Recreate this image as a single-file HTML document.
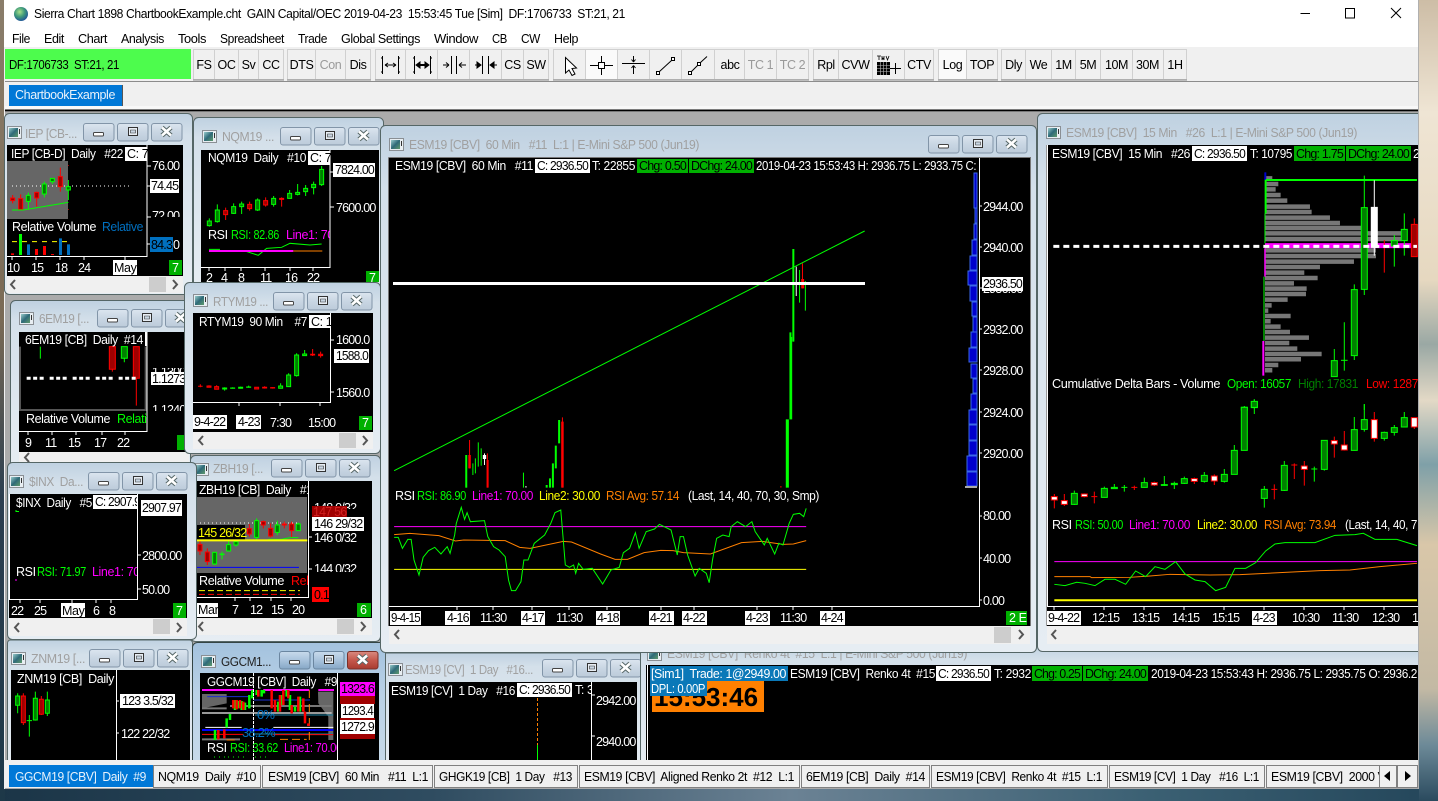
<!DOCTYPE html>
<html><head><meta charset="utf-8"><title>Sierra Chart</title>
<style>
html,body{margin:0;padding:0;width:1438px;height:801px;overflow:hidden;background:#1d3848}
svg{display:block}
text{font-family:"Liberation Sans",sans-serif;font-size:12.5px;fill:#fff;white-space:pre;letter-spacing:-.4px}
.n{letter-spacing:-.8px}
.k{fill:#000}
.g{fill:#00ff00}.m{fill:#ff00ff}.y{fill:#ffff00}.o{fill:#ff8000}.r{fill:#ff0000}.dg{fill:#008000}.b{fill:#0070c0}
.t{fill:#a0a0a0;font-size:12.5px}
.d{fill:#9a9a9a}
path,line,rect,polyline{vector-effect:non-scaling-stroke}
.gw{stroke:#0f0;fill:none}.gb{stroke:#0f0;fill:#008000}
.rw{stroke:#f00;fill:none}.rb{stroke:#f00;fill:#a00000}.rwb{stroke:#f00;fill:#fff}
.lg{stroke:#0f0;fill:none}.lo{stroke:#ff8000;fill:none}
.ch{stroke:#555;stroke-width:2;fill:none}
</style></head><body>
<svg width="1438" height="801" viewBox="0 0 1438 801" xmlns="http://www.w3.org/2000/svg">
<defs>
<linearGradient id="fr" x1="0" y1="0" x2="0" y2="1"><stop offset="0" stop-color="#bfd1e1"/><stop offset=".12" stop-color="#d4e0ea"/><stop offset="1" stop-color="#e6edf3"/></linearGradient>
<linearGradient id="fa" x1="0" y1="0" x2="0" y2="1"><stop offset="0" stop-color="#a3c2de"/><stop offset=".4" stop-color="#b9d1e6"/><stop offset="1" stop-color="#c8dbea"/></linearGradient>
<linearGradient id="btn" x1="0" y1="0" x2="0" y2="1"><stop offset="0" stop-color="#dbe5ef"/><stop offset=".5" stop-color="#c9d6e3"/><stop offset="1" stop-color="#bccbda"/></linearGradient>
<linearGradient id="btna" x1="0" y1="0" x2="0" y2="1"><stop offset="0" stop-color="#c8daec"/><stop offset=".5" stop-color="#a9c3dc"/><stop offset="1" stop-color="#86a7c6"/></linearGradient>
<linearGradient id="cls" x1="0" y1="0" x2="0" y2="1"><stop offset="0" stop-color="#d88a80"/><stop offset=".5" stop-color="#c5584c"/><stop offset="1" stop-color="#a83b30"/></linearGradient>
<linearGradient id="ic" x1="0" y1="0" x2="1" y2="1"><stop offset="0" stop-color="#9cc"/><stop offset=".5" stop-color="#2f6a78"/><stop offset="1" stop-color="#5f9a6c"/></linearGradient>
<radialGradient id="gl" cx=".4" cy=".35" r=".7"><stop offset="0" stop-color="#a8e08a"/><stop offset=".5" stop-color="#3f9a7a"/><stop offset="1" stop-color="#1d4f9a"/></radialGradient>
<linearGradient id="wr" x1="0" y1="0" x2="0" y2="1"><stop offset="0" stop-color="#cdbda6"/><stop offset=".14" stop-color="#efe5d4"/><stop offset=".35" stop-color="#e6d8c0"/><stop offset=".43" stop-color="#9aa8a4"/><stop offset=".5" stop-color="#e3d9c6"/><stop offset=".58" stop-color="#7fa0a8"/><stop offset=".68" stop-color="#d9c7a9"/><stop offset=".86" stop-color="#c3b9a4"/><stop offset=".93" stop-color="#6d8a98"/><stop offset="1" stop-color="#2a4a5e"/></linearGradient>
<linearGradient id="wl" x1="0" y1="0" x2="0" y2="1"><stop offset="0" stop-color="#8a7d6a"/><stop offset=".4" stop-color="#7a6a55"/><stop offset=".62" stop-color="#2c3f50"/><stop offset="1" stop-color="#1d3848"/></linearGradient>
<linearGradient id="wb" x1="0" y1="0" x2="1" y2="0"><stop offset="0" stop-color="#1b3547"/><stop offset=".3" stop-color="#2f4c60"/><stop offset=".55" stop-color="#6b8294"/><stop offset=".8" stop-color="#3b6073"/><stop offset="1" stop-color="#24465a"/></linearGradient>
<g id="ico"><rect x=".5" y=".5" width="14" height="12" fill="#e8eef2" stroke="#8a8f94"/><rect x="2" y="2" width="9" height="9" fill="url(#ic)"/><rect x="12" y="3" width="1" height="5" fill="#333"/></g>
<g id="b1"><rect x=".5" y=".5" width="30.5" height="17.5" rx="2.5" fill="url(#btn)" stroke="#8295a8"/></g>
<g id="gly"><rect x="10.5" y="9.5" width="10" height="3.5" rx="1" fill="#fff" stroke="#444"/>
<rect x="45.5" y="4.5" width="9" height="8" fill="#e8eef4" stroke="#333"/><rect x="47.5" y="7" width="5" height="3" fill="#c9d6e3" stroke="#333" stroke-width=".6"/>
<path d="M79 4.5L88 12.5M88 4.5L79 12.5" stroke="#566" stroke-width="4.6" fill="none"/><path d="M79 4.5L88 12.5M88 4.5L79 12.5" stroke="#fff" stroke-width="2.6" fill="none"/></g>
<g id="ctl"><use href="#b1"/><use href="#b1" x="34"/><use href="#b1" x="68"/><use href="#gly"/></g>
<g id="lt"><path d="M4 0L0 4.5L4 9" fill="none" stroke="#555" stroke-width="2"/></g>
<g id="rt"><path d="M0 0L4 4.5L0 9" fill="none" stroke="#555" stroke-width="2"/></g>
</defs>

<!-- desktop -->
<rect width="1438" height="801" fill="url(#wb)"/>
<rect x="0" y="0" width="5" height="801" fill="url(#wl)"/>

<!-- main window chrome -->
<rect x="4" y="0" width="1415" height="789" fill="#f0f0f0"/>
<rect x="4" y="0" width="1415" height="47" fill="#fff"/>
<circle cx="21" cy="14" r="7" fill="url(#gl)"/>
<text x="34" y="18" textLength="591" lengthAdjust="spacingAndGlyphs" class="k">Sierra Chart 1898 ChartbookExample.cht  GAIN Capital/OEC 2019-04-23  15:53:45 Tue [Sim]  DF:1706733  ST:21, 21</text>
<path d="M1300.5 13.5H1310" stroke="#000"/><rect x="1345.5" y="8.5" width="9" height="9.5" fill="none" stroke="#000"/><path d="M1391 8L1401 18M1401 8L1391 18" stroke="#000"/>
<g class="k">
<text class="k" x="12" y="43" textLength="18" lengthAdjust="spacingAndGlyphs">File</text>
<text class="k" x="44" y="43" textLength="20" lengthAdjust="spacingAndGlyphs">Edit</text>
<text class="k" x="78" y="43" textLength="29" lengthAdjust="spacingAndGlyphs">Chart</text>
<text class="k" x="121" y="43" textLength="43" lengthAdjust="spacingAndGlyphs">Analysis</text>
<text class="k" x="178" y="43" textLength="28" lengthAdjust="spacingAndGlyphs">Tools</text>
<text class="k" x="220" y="43" textLength="64" lengthAdjust="spacingAndGlyphs">Spreadsheet</text>
<text class="k" x="298" y="43" textLength="29" lengthAdjust="spacingAndGlyphs">Trade</text>
<text class="k" x="341" y="43" textLength="79" lengthAdjust="spacingAndGlyphs">Global Settings</text>
<text class="k" x="434" y="43" textLength="44" lengthAdjust="spacingAndGlyphs">Window</text>
<text class="k" x="492" y="43" textLength="15" lengthAdjust="spacingAndGlyphs">CB</text>
<text class="k" x="521" y="43" textLength="19" lengthAdjust="spacingAndGlyphs">CW</text>
<text class="k" x="554" y="43" textLength="24" lengthAdjust="spacingAndGlyphs">Help</text>
</g>
<!-- toolbar -->
<rect x="5" y="49" width="186" height="30" fill="#4dfc4d"/>
<text class="k" x="9" y="69" textLength="110" lengthAdjust="spacingAndGlyphs">DF:1706733  ST:21, 21</text>
<g fill="#f0f0f0" stroke="#d0d0d0">
<rect x="193.5" y="49.5" width="21" height="30"/><rect x="214.5" y="49.5" width="24" height="30"/><rect x="238.5" y="49.5" width="20" height="30"/><rect x="258.5" y="49.5" width="25" height="30"/>
<rect x="287.5" y="49.5" width="28" height="30"/><rect x="315.5" y="49.5" width="30" height="30"/><rect x="345.5" y="49.5" width="25" height="30"/>
<rect x="375.5" y="49.5" width="30" height="30"/><rect x="405.5" y="49.5" width="32" height="30"/><rect x="437.5" y="49.5" width="32" height="30"/><rect x="469.5" y="49.5" width="32" height="30"/><rect x="501.5" y="49.5" width="22" height="30"/><rect x="523.5" y="49.5" width="25" height="30"/>
<rect x="553.5" y="49.5" width="32" height="30"/><rect x="585.5" y="49.5" width="32" height="30" fill="#fafafa"/><rect x="617.5" y="49.5" width="32" height="30"/><rect x="649.5" y="49.5" width="32" height="30"/><rect x="681.5" y="49.5" width="33" height="30"/><rect x="714.5" y="49.5" width="30" height="30"/><rect x="744.5" y="49.5" width="32" height="30"/><rect x="776.5" y="49.5" width="32" height="30"/>
<rect x="813.5" y="49.5" width="25" height="30"/><rect x="838.5" y="49.5" width="34" height="30"/><rect x="872.5" y="49.5" width="32" height="30"/><rect x="904.5" y="49.5" width="29" height="30"/>
<rect x="938.5" y="49.5" width="28" height="30" fill="#fafafa"/><rect x="966.5" y="49.5" width="31" height="30"/>
<rect x="1001.5" y="49.5" width="24" height="30"/><rect x="1025.5" y="49.5" width="26" height="30"/><rect x="1051.5" y="49.5" width="24" height="30"/><rect x="1075.5" y="49.5" width="25" height="30"/><rect x="1100.5" y="49.5" width="32" height="30"/><rect x="1132.5" y="49.5" width="31" height="30"/><rect x="1163.5" y="49.5" width="23" height="30"/>
</g>
<path d="M193 80H284M287 80H371M375 80H549M553 80H809M813 80H934M938 80H998M1001 80H1187" stroke="#8c8c8c"/>
<g text-anchor="middle">
<text class="k" x="204" y="69">FS</text><text class="k" x="226.500" y="69">OC</text><text class="k" x="248.500" y="69">Sv</text><text class="k" x="271" y="69">CC</text>
<text class="k" x="301.500" y="69">DTS</text><text class="d" x="330.500" y="69">Con</text><text class="k" x="358" y="69">Dis</text>
<text class="k" x="512.500" y="69">CS</text><text class="k" x="536" y="69">SW</text>
<text class="k" x="730" y="69">abc</text><text class="d" x="760.500" y="69">TC 1</text><text class="d" x="792.500" y="69">TC 2</text>
<text class="k" x="826" y="69">Rpl</text><text class="k" x="855.500" y="69">CVW</text><text class="k" x="919" y="69">CTV</text>
<text class="k" x="952.500" y="69">Log</text><text class="k" x="982" y="69">TOP</text>
<text class="k" x="1013.500" y="69">Dly</text><text class="k" x="1038.500" y="69">We</text><text class="k" x="1063.500" y="69">1M</text><text class="k" x="1088" y="69">5M</text><text class="k" x="1116.500" y="69">10M</text><text class="k" x="1147.500" y="69">30M</text><text class="k" x="1175" y="69">1H</text>
</g>
<g stroke="#000" fill="none">
<path d="M382.500 56V74M398.500 56V74M381 58h1M381 72h1M399 58h1M399 72h1M385 65H396M385 65l3-2M385 65l3 2M396 65l-3-2M396 65l-3 2" />
<path d="M414.500 56V74M430.500 56V74M413 58h1M413 72h1M431 58h1M431 72h1"/><path d="M417 65H428" stroke-width="2"/><path d="M416 65l4-3v6zM429 65l-4-3v6z" fill="#000"/>
<path d="M451.500 56V74M456.500 56V74M443 65H449M449 65l-3-2.500M449 65l-3 2.500M466 65H459M459 65l3-2.500M459 65l3 2.500"/>
<path d="M482.500 56V74M488.500 56V74M475 65H480M491 65H497"/><path d="M481 65l-4-3v6zM490 65l4-3v6z" fill="#000"/>
<path d="M565.500 57.500V73L569 70L572 75.500L575 74L572 68.500L576.500 68Z" fill="#fff"/>
<path d="M590 65.500H613M601.500 56V75"/><rect x="598.500" y="62.500" width="6" height="6" fill="#fff"/>
<path d="M622 63.500H645M633.500 56V62M633.500 62l-2-2.500M633.500 62l2-2.500M633.500 74V65.500M633.500 65.500l-2 2.500M633.500 65.500l2 2.500"/>
<rect x="656.500" y="71.500" width="3" height="3" fill="#fff"/><rect x="671.500" y="57.500" width="3" height="3" fill="#fff"/><path d="M659.500 71.500L671.500 60.500"/>
<rect x="688.500" y="71.500" width="3" height="3" fill="#fff"/><rect x="697.500" y="62.500" width="3" height="3" fill="#fff"/><path d="M691.500 71.500L697.500 65.500M700.500 62.500L707 56.500"/>
<path d="M890 68.500H901M895.500 63V74" />
</g>
<rect x="877" y="62" width="13" height="13" fill="#000"/><path d="M877 65.500H890M877 68.500H890M877 71.500H890M880.500 62V75M883.500 62V75M886.500 62V75" stroke="#bbb" stroke-width=".6"/>
<path d="M877 56h4M879 56v4M882 56v4l1-2 1 2v-4M886 56l1.500 4 1.500-4" stroke="#000" stroke-width=".8" fill="none"/>

<!-- tab bar -->
<path d="M5 81.500H1418" stroke="#8c8c8c"/>
<rect x="9" y="85" width="113" height="21" fill="#0078d7"/><path d="M122.500 85V106" stroke="#555"/>
<text x="15" y="99" textLength="100" lengthAdjust="spacingAndGlyphs" style="fill:#e8f2fb">ChartbookExample</text>
<rect x="5" y="106" width="1414" height="4" fill="#f8f8f8"/><rect x="5" y="109.500" width="1414" height="2" fill="#000"/>
<rect x="5" y="112" width="1414" height="648" fill="#ababab"/>

<!-- W1 IEP -->
<rect x="4.500" y="113.500" width="188" height="181" rx="5" fill="url(#fr)" stroke="#566"/>
<use href="#ico" x="7" y="126"/><text class="t" x="25" y="138" textLength="52" lengthAdjust="spacingAndGlyphs">IEP [CB-...</text><use href="#ctl" x="83" y="123"/>
<svg x="7" y="145" width="176" height="131" viewBox="7 145 176 131">
<rect x="7" y="145" width="176" height="131" fill="#000"/>
<rect x="7" y="161" width="61" height="58" fill="#666"/>
<path d="M12 186H130" stroke="#fff" stroke-dasharray="1 3"/>
<g transform="translate(0,110) scale(.3333)">
<path class="rw" d="M38 255V280M62 253V300M110 245V290M181 173V245"/><path class="rb" d="M32 264h12v8h-12zM56 266h12v32h-12zM104 247h12v17h-12zM175 200h12v30h-12z"/>
<path class="gw" d="M85 248V298M133 215V262M157 205V222M205 210V270M36 300H70L205 277"/><path class="gb" d="M79 256h12v18h-12zM127 222h12v30h-12zM151 205h12v10h-12zM199 230h12v10h-12z"/>
<path d="M33 430h9v5h-9zM105 417h9v18h-9zM129 408h9v27h-9zM153 432h9v3h-9z" fill="#f00"/><path d="M57 372h9v63h-9z" fill="#0f0"/><path d="M81 403h9v32h-9zM177 385h9v50h-9zM201 403h9v32h-9z" fill="#0070c0"/>
<path d="M36 395H210" stroke="#ff0" stroke-dasharray="5 5"/><path d="M204 166h3v2h-3zM204 298h3v2h-3z" fill="#f00"/>
</g>
<path d="M147 145V256.500H7" stroke="#fff" fill="none"/>
<path d="M147 166h4M147 217h4M147 186h4M147 244h4M12 256v4M36 256v4M60 256v4M84 256v4M125 256v4" stroke="#fff"/>
<text x="11" y="158" textLength="112" lengthAdjust="spacingAndGlyphs">IEP [CB-D]  Daily   #22</text>
<rect x="125" y="147" width="22" height="14" fill="#fff"/><text class="k" x="127" y="158">C: 7</text>
<text class="n" x="152" y="170">76.00</text><rect x="150" y="179" width="29" height="14" fill="#fff"/><text class="k n" x="151" y="190">74.45</text>
<svg x="150" y="210" width="30" height="7" viewBox="150 210 30 7"><text class="n" x="152" y="220">72.00</text></svg>
<text x="12" y="231" textLength="84" lengthAdjust="spacingAndGlyphs">Relative Volume</text><text class="b" x="102" y="231" textLength="41" lengthAdjust="spacingAndGlyphs">Relative</text>
<rect x="150" y="237" width="23" height="15" fill="#0070c0"/><text class="k n" x="151" y="249">84.3</text><text x="173" y="249">0</text>
<text class="n" x="7" y="272">10</text><text class="n" x="31" y="272">15</text><text class="n" x="55" y="272">18</text><text class="n" x="78" y="272">24</text>
<rect x="113" y="260" width="24" height="15" fill="#fff"/><text class="k" x="114" y="272">May</text>
<rect x="169" y="260" width="13" height="15" fill="#00b000"/><text x="172" y="272">7</text>
</svg>
<rect x="7" y="276" width="176" height="17" fill="#f0f0f0"/><rect x="149" y="277" width="17" height="15" fill="#cdcdcd"/><use href="#lt" x="11" y="280"/><use href="#rt" x="173" y="280"/>

<!-- W2 NQM -->
<rect x="193.500" y="117.500" width="190" height="170" rx="5" fill="url(#fr)" stroke="#566"/>
<use href="#ico" x="202" y="130"/><text class="t" x="222" y="141" textLength="52" lengthAdjust="spacingAndGlyphs">NQM19 ...</text><use href="#ctl" x="280" y="127"/>
<svg x="201" y="150" width="178" height="132" viewBox="201 150 178 132">
<rect x="201" y="150" width="178" height="132" fill="#000"/>
<g transform="translate(0,110) scale(.3333)">
<path class="gw" d="M628 325V350M652 283V338M701 280V312M725 275V312M773 265V303M821 258V290M869 240V266M893 222V256M917 225V258M941 215V253M965 168V228"/>
<path class="gb" d="M622 333h12v14h-12zM646 300h12v35h-12zM695 290h12v20h-12zM719 282h12v8h-12zM767 270h12v30h-12zM815 265h12v18h-12zM863 250h12v15h-12zM887 247h12v6h-12zM911 235h12v10h-12zM935 223h12v10h-12zM959 178h12v46h-12z"/>
<path class="rw" d="M677 293V330M749 275V302M797 262V290M845 262V290"/><path class="rb" d="M671 302h12v12h-12zM743 283h12v13h-12zM791 272h12v13h-12zM839 265h12v3h-12z"/>
<path class="lg" d="M627 418H660M735 423L775 436L800 415L845 412L870 400L930 405L965 402"/>
<path d="M627 423H880" stroke="#f0f" stroke-width="2"/><path d="M880 423H967" stroke="#ff8000"/>
</g>
<path d="M330 150V267.500H201" stroke="#fff" fill="none"/><path d="M330 172h4M330 207h4M209 267v4M225 267v4M241 267v4M265 267v4M290 267v4M313 267v4" stroke="#fff"/>
<text x="208" y="162" textLength="98" lengthAdjust="spacingAndGlyphs">NQM19  Daily   #10</text>
<rect x="308" y="151" width="22" height="14" fill="#fff"/><text class="k" x="310" y="162">C: 7</text>
<rect x="333" y="163" width="42" height="14" fill="#fff"/><text class="k n" x="335" y="174" textLength="39" lengthAdjust="spacingAndGlyphs">7824.00</text><text class="n" x="336" y="212">7600.00</text>
<text x="208" y="239">RSI</text><text class="g" x="231" y="239" textLength="48" lengthAdjust="spacingAndGlyphs">RSI: 82.86</text>
<svg x="286" y="228" width="44" height="14" viewBox="286 228 44 14"><text class="m" x="286" y="239">Line1: 70.00</text></svg>
<text class="n" x="206" y="282">2</text><text class="n" x="221" y="282">4</text><text class="n" x="238" y="282">8</text><text class="n" x="260" y="282">11</text><text class="n" x="285" y="282">16</text><text class="n" x="307" y="282">22</text>
<rect x="366" y="271" width="13" height="11" fill="#00b000"/><text x="369" y="282">7</text>
</svg>

<!-- W3 6EM -->
<rect x="10.500" y="300.500" width="180" height="170" rx="5" fill="url(#fr)" stroke="#566"/>
<use href="#ico" x="19" y="312"/><text class="t" x="39" y="323" textLength="50" lengthAdjust="spacingAndGlyphs">6EM19 [...</text><use href="#ctl" x="97" y="309"/>
<svg x="19" y="332" width="170" height="130" viewBox="19 332 170 130">
<rect x="19" y="332" width="170" height="130" fill="#000"/>
<g transform="translate(0,110) scale(.3333)">
<path d="M60 710V900H437V710" class="ch"/>
<path class="gw" d="M121 710V746M373 710V757"/><path class="gb" d="M364 710h18v35h-18z"/>
<path class="rw" d="M337 710V785M409 710V887"/><path class="rb" d="M328 710h18v68h-18zM400 710h18v95h-18z"/>
<path d="M80 805H410" stroke="#fff" stroke-width="3" stroke-dasharray="4 2.500 4 2.500 4 6"/>
</g>
<path d="M147 332V431.500H19" stroke="#fff" fill="none"/>
<path d="M28 431v4M52 431v4M76 431v4M102 431v4M125 431v4" stroke="#fff"/>
<text x="25" y="344" textLength="118" lengthAdjust="spacingAndGlyphs">6EM19 [CB]  Daily  #14</text><rect x="145" y="332" width="2" height="14" fill="#fff"/>
<rect x="151" y="372" width="34" height="13" fill="#fff"/><text class="k n" x="152" y="383">1.1273</text>
<svg x="152" y="368" width="34" height="4" viewBox="152 368 34 4"><text class="n" x="152" y="376">1.1300</text></svg>
<svg x="152" y="405" width="34" height="6" viewBox="152 405 34 6"><text class="n" x="152" y="414">1.1240</text></svg>
<text x="26" y="423" textLength="84" lengthAdjust="spacingAndGlyphs">Relative Volume</text><svg x="116" y="410" width="31" height="16" viewBox="116 410 31 16"><text class="g" x="117" y="423">Relative</text></svg>
<text class="n" x="25" y="447">9</text><text class="n" x="45" y="447">11</text><text class="n" x="68" y="447">15</text><text class="n" x="94" y="447">17</text><text class="n" x="117" y="447">22</text>
<rect x="177" y="435" width="7" height="15" fill="#00b000"/>
</svg>
<rect x="19" y="452" width="170" height="12" fill="#f0f0f0"/><use href="#lt" x="25" y="453"/>

<!-- W5 ZBH -->
<rect x="190.500" y="455.500" width="190" height="186" rx="5" fill="url(#fr)" stroke="#566"/>
<use href="#ico" x="194" y="463"/><text class="t" x="213" y="473" textLength="50" lengthAdjust="spacingAndGlyphs">ZBH19 [...</text><use href="#ctl" x="271" y="459"/>
<svg x="197" y="481" width="175" height="137" viewBox="197 481 175 137">
<rect x="197" y="481" width="175" height="137" fill="#000"/>
<rect x="197" y="497" width="110" height="76" fill="#666"/>
<path d="M200 523H300" stroke="#fff" stroke-dasharray="1 3"/>
<g transform="translate(0,450) scale(.3333)">
<rect x="591" y="225" width="144" height="43" fill="#000"/>
<path class="rw" d="M600 270V315M622 295V345M748 222V260M790 212V235M812 220V262M853 215V235M875 215V262"/><path class="rb" d="M594 283h12v20h-12zM616 306h12v29h-12zM742 236h12v16h-12zM784 215h12v10h-12zM806 235h12v23h-12zM847 222h12v3h-12zM869 222h12v20h-12z"/>
<path class="gw" d="M644 305V345M666 305V328M686 272V305M708 270V290M770 205V270M832 212V255M895 218V242M805 268H845L870 263H895"/>
<path class="gb" d="M638 307h12v35h-12zM660 312h12v2h-12zM680 284h12v19h-12zM702 275h12v10h-12zM764 212h12v50h-12zM826 225h12v22h-12zM889 222h12v20h-12z"/>
<path d="M591 271H922" stroke="#ff0" stroke-width="2"/><path d="M591 352H897" stroke="#0000ff"/>
<path d="M597 422H900" stroke="#ff0" stroke-dasharray="6 3"/><path d="M597 433H900" stroke="#f00" stroke-dasharray="6 3"/>
</g>
<path d="M308.500 481V597.500H197" stroke="#fff" fill="none"/>
<path d="M308 537h4M308 569h4M235 597v4M250 597v4M271 597v4M291 597v4" stroke="#fff"/>
<svg x="197" y="481" width="111" height="16" viewBox="197 481 111 16"><text x="199" y="494" textLength="120" lengthAdjust="spacingAndGlyphs">ZBH19 [CB]  Daily   #19</text></svg>
<text class="y n" x="198" y="537">145 26/32</text>
<svg x="313" y="500" width="58" height="9" viewBox="313 500 58 9"><text class="n" x="314" y="512">148 0/32</text></svg>
<rect x="312" y="506" width="35" height="11" fill="#a00000"/><text class="n" x="313" y="516" style="fill:#d02020">147 56</text>
<rect x="312" y="517" width="52" height="14" fill="#fff"/><text class="k n" x="314" y="528">146 29/32</text>
<text class="n" x="314" y="542">146 0/32</text>
<svg x="313" y="564" width="58" height="8" viewBox="313 564 58 8"><text class="n" x="314" y="573">144 0/32</text></svg>
<text x="199" y="585" textLength="85" lengthAdjust="spacingAndGlyphs">Relative Volume</text><svg x="290" y="574" width="18" height="14" viewBox="290 574 18 14"><text class="r" x="291" y="585">Relative</text></svg>
<rect x="312" y="587" width="17" height="15" fill="#f00"/><text class="k n" x="314" y="599">0.1</text>
<rect x="197" y="603" width="21" height="14" fill="#fff"/><text class="k" x="198" y="614">Mar</text>
<text class="n" x="232" y="614">7</text><text class="n" x="250" y="614">12</text><text class="n" x="271" y="614">15</text><text class="n" x="292" y="614">20</text>
<rect x="357" y="603" width="14" height="14" fill="#00b000"/><text x="360" y="614">6</text>
</svg>
<rect x="197" y="618" width="175" height="17" fill="#f0f0f0"/><rect x="337" y="619" width="17" height="15" fill="#cdcdcd"/><use href="#lt" x="199" y="622"/><use href="#rt" x="361" y="622"/>

<!-- W4 RTYM -->
<rect x="184.500" y="282.500" width="196" height="171" rx="5" fill="url(#fr)" stroke="#566"/>
<use href="#ico" x="193" y="294"/><text class="t" x="213" y="306" textLength="55" lengthAdjust="spacingAndGlyphs">RTYM19 ...</text><use href="#ctl" x="273" y="292"/>
<svg x="193" y="313" width="180" height="119" viewBox="193 313 180 119">
<rect x="193" y="313" width="180" height="119" fill="#000"/>
<g transform="translate(0,110) scale(.3333)">
<path class="rw" d="M601 823V832M594 829H608M627 826V832M650 826V838M770 832V838M794 829V836M818 832V836M938 717V738M962 725V743"/>
<path class="rb" d="M621 828h12v4h-12zM644 830h12v8h-12zM764 832h12v5h-12zM788 832h12v2h-12zM812 833h12v1h-12zM932 733h12v2h-12zM956 733h12v4h-12z"/>
<path class="gw" d="M674 832V842M698 832V836M722 830V836M746 827V833M842 820V836M866 790V830M890 730V800M914 720V738"/>
<path class="gb" d="M668 834h12v3h-12zM692 834h12v1h-12zM716 832h12v3h-12zM740 831h12v1h-12zM836 828h12v7h-12zM860 795h12v35h-12zM884 735h12v62h-12zM908 732h12v5h-12z"/>
</g>
<path d="M330.500 313V402.500H193" stroke="#fff" fill="none"/>
<path d="M330 340h4M330 392h4M239 402v4M280 402v4M320 402v4" stroke="#fff"/>
<text x="199" y="326" textLength="108" lengthAdjust="spacingAndGlyphs">RTYM19  90 Min    #7</text>
<rect x="309" y="315" width="21" height="13" fill="#fff"/><text class="k" x="311" y="326">C: 1</text>
<text class="n" x="336" y="344">1600.0</text><rect x="334" y="349" width="35" height="14" fill="#fff"/><text class="k n" x="336" y="360" textLength="32" lengthAdjust="spacingAndGlyphs">1588.0</text><text class="n" x="336" y="397">1560.0</text>
<rect x="193" y="415" width="34" height="14" fill="#fff"/><text class="k n" x="194" y="426">9-4-22</text>
<rect x="236" y="415" width="25" height="14" fill="#fff"/><text class="k n" x="238" y="426">4-23</text>
<text class="n" x="270" y="427">7:30</text><text class="n" x="308" y="427">15:00</text>
<rect x="359" y="416" width="13" height="14" fill="#00b000"/><text x="362" y="427">7</text>
</svg>
<rect x="193" y="432" width="180" height="17" fill="#f0f0f0"/><rect x="339" y="433" width="17" height="15" fill="#cdcdcd"/><use href="#lt" x="199" y="436"/><use href="#rt" x="363" y="436"/>

<!-- W6 INX -->
<rect x="7.500" y="462.500" width="189" height="177" rx="5" fill="url(#fr)" stroke="#566"/>
<use href="#ico" x="9" y="475"/><text class="t" x="29" y="486" textLength="54" lengthAdjust="spacingAndGlyphs">$INX  Da...</text><use href="#ctl" x="88" y="472"/>
<svg x="9" y="494" width="178" height="124" viewBox="9 494 178 124">
<rect x="9" y="494" width="178" height="124" fill="#000"/>
<path d="M137.500 494V599.500H9.500V494" stroke="#fff" fill="none"/>
<path d="M137 555h4M137 589h4M20 599v4M40 599v4M72 599v4M96 599v4M111 599v4" stroke="#fff"/>
<path d="M16 510v1.500H19" stroke="#0f0" fill="none"/><path d="M16 579v2" stroke="#f0f"/>
<text x="16" y="507" textLength="76" lengthAdjust="spacingAndGlyphs">$INX  Daily   #5</text>
<rect x="93" y="495" width="44" height="14" fill="#fff"/><svg x="93" y="495" width="44" height="14" viewBox="93 495 44 14"><text class="k n" x="95" y="506" textLength="51" lengthAdjust="spacingAndGlyphs">C: 2907.97</text></svg>
<rect x="141" y="500" width="41" height="16" fill="#fff"/><text class="k n" x="142" y="512" textLength="39" lengthAdjust="spacingAndGlyphs">2907.97</text>
<text class="n" x="142" y="560">2800.00</text><text class="n" x="142" y="594">50.00</text>
<text x="16" y="576">RSI</text><text class="g" x="37" y="576" textLength="49" lengthAdjust="spacingAndGlyphs">RSI: 71.97</text>
<svg x="92" y="565" width="45" height="14" viewBox="92 565 45 14"><text class="m" x="92" y="576">Line1: 70.00</text></svg>
<text class="n" x="11" y="615">22</text><text class="n" x="34" y="615">25</text>
<rect x="61" y="603" width="24" height="14" fill="#fff"/><text class="k" x="62" y="615">May</text>
<text class="n" x="93" y="615">6</text><text class="n" x="109" y="615">8</text>
<rect x="173" y="603" width="13" height="15" fill="#00b000"/><text x="176" y="615">7</text>
</svg>
<rect x="9" y="618" width="178" height="18" fill="#f0f0f0"/><rect x="153" y="619" width="17" height="15" fill="#cdcdcd"/><use href="#lt" x="15" y="623"/><use href="#rt" x="177" y="623"/>

<!-- W7 ZNM -->
<rect x="7.500" y="640" width="185" height="125" rx="3" fill="url(#fr)" stroke="#566"/>
<use href="#ico" x="11" y="652"/><text class="t" x="31" y="663" textLength="54" lengthAdjust="spacingAndGlyphs">ZNM19 [...</text><use href="#ctl" x="89" y="649"/>
<svg x="11" y="670" width="179" height="90" viewBox="11 670 179 90">
<rect x="11" y="670" width="179" height="90" fill="#000"/>
<path d="M116.500 670V760" stroke="#fff"/><path d="M116 701h3M116 733h3" stroke="#fff"/>
<g transform="translate(0,450) scale(.3333)">
<path class="gw" d="M53 730V790M88 795V860M106 725V812M142 725V798M80 812H96"/><path class="gb" d="M47 738h12v28h-12zM100 745h12v65h-12zM136 750h12v40h-12z"/>
<path class="rw" d="M70 730V825M124 738V795"/><path class="rb" d="M64 738h12v80h-12zM118 748h12v45h-12z"/>
</g>
<text x="17" y="683" textLength="97" lengthAdjust="spacingAndGlyphs">ZNM19 [CB]  Daily</text>
<rect x="120" y="694" width="55" height="14" fill="#fff"/><text class="k n" x="122" y="705" textLength="51" lengthAdjust="spacingAndGlyphs">123 3.5/32</text>
<text class="n" x="121" y="738">122 22/32</text>
</svg>

<!-- W8 GGCM (active) -->
<rect x="192.500" y="642.500" width="196" height="125" rx="5" fill="url(#fa)" stroke="#344"/>
<use href="#ico" x="201" y="655"/><text x="221" y="666" textLength="50" lengthAdjust="spacingAndGlyphs" style="fill:#222;font-size:12.5px">GGCM1...</text>
<rect x="279.500" y="651.500" width="30.500" height="17.500" rx="2.500" fill="url(#btna)" stroke="#6b86a0"/><rect x="313.500" y="651.500" width="30.500" height="17.500" rx="2.500" fill="url(#btna)" stroke="#6b86a0"/><rect x="347.500" y="651.500" width="30.500" height="17.500" rx="2.500" fill="url(#cls)" stroke="#7a3028"/>
<use href="#gly" x="279" y="651"/>
<svg x="200" y="673" width="179" height="87" viewBox="200 673 179 87">
<rect x="200" y="673" width="179" height="87" fill="#000"/>
<g transform="translate(190,640) scale(.3333)">
<path d="M36 162H110V190L36 205ZM384 155H430V300H415V230L385 190Z" fill="#666"/>
<path d="M36 219H425" stroke="#ccc" stroke-width="1.500"/><path d="M36 205H110M120 198H425" stroke="#777" stroke-width="2"/><path d="M36 298H150" stroke="#777" stroke-width="2"/>
<path d="M36 150H190M220 150H358M385 150H432" stroke="#f0f" stroke-width="2"/>
<path d="M52 170H180M192 180H360" stroke="#1d2fd0"/><path d="M195 225H430M195 282H430" stroke="#1a80a0"/>
<path d="M36 270H430" stroke="#00f" stroke-width="2"/><path d="M36 283H160M250 284H430" stroke="#f00"/><path d="M46 262H155M250 262H430" stroke="#fff"/>
<path d="M358 150V300" stroke="#ff8000" stroke-dasharray="8 6"/><path d="M110 300H145M270 298H350" stroke="#ff8000" stroke-dasharray="8 4"/>
<path d="M75 270V300M110 235V262M120 222V240M135 180V210M145 183V205M155 183V210M165 188V210M178 165V205M187 150V175M200 150V165M215 150V170M222 150V160M265 185V215M275 165V195M290 150V170M300 165V210M315 200V215M330 170V215" stroke="#0f0" stroke-width="2.500"/>
<path d="M85 270V298M103 268V295M130 180V205M140 180V208M150 180V205M160 185V210M205 150V170M245 150V205M255 180V215M270 165V215M280 150V195M295 150V175M305 195V220M325 170V215M340 175V215M345 215V250M355 250V258" stroke="#f00" stroke-width="2.500"/>
</g>
<path d="M253.500 673V760" stroke="#fff" stroke-dasharray="3 1"/><path d="M337.500 673V760" stroke="#fff"/>
<text x="207" y="686" textLength="130" lengthAdjust="spacingAndGlyphs">GGCM19 [CBV]  Daily   #9</text>
<text class="b n" x="257" y="719" style="font-size:13px">0%</text><text class="b n" x="242" y="737" style="font-size:13px">38.2%</text>
<rect x="340" y="682" width="35" height="14" fill="#f0f"/><text class="k n" x="341" y="693" textLength="33" lengthAdjust="spacingAndGlyphs">1323.6</text>
<rect x="340" y="696" width="35" height="8" fill="#a00000"/>
<rect x="341" y="704" width="33" height="14" fill="#fff"/><text class="k n" x="342" y="715" textLength="31" lengthAdjust="spacingAndGlyphs">1293.4</text>
<rect x="340" y="718" width="35" height="2" fill="#a00000"/>
<rect x="340" y="720" width="35" height="14" fill="#fff"/><text class="k n" x="341" y="731" textLength="33" lengthAdjust="spacingAndGlyphs">1272.9</text>
<rect x="340" y="734" width="35" height="5" fill="#a00000"/>
<text x="207" y="752">RSI</text><text class="g" x="230" y="752" textLength="48" lengthAdjust="spacingAndGlyphs">RSI: 33.62</text><svg x="284" y="740" width="53" height="15" viewBox="284 740 53 15"><text class="m" x="284" y="752" textLength="58" lengthAdjust="spacingAndGlyphs">Line1: 70.00</text></svg>
<path d="M214 757l15 0M228 757h20M255 757h15" stroke="#0f0" stroke-dasharray="1 4"/>
</svg>

<!-- W11 ESM CV -->
<rect x="385.500" y="653" width="256" height="115" fill="url(#fr)" stroke="#566"/>
<use href="#ico" x="388" y="663"/><text class="t" x="405" y="674" textLength="128" lengthAdjust="spacingAndGlyphs">ESM19 [CV]  1 Day   #16...</text><use href="#ctl" x="542" y="659"/>
<svg x="389" y="682" width="248" height="78" viewBox="389 682 248 78">
<rect x="389" y="682" width="248" height="78" fill="#000"/>
<path d="M591.500 682V760" stroke="#fff"/><path d="M591 695h4M591 736h4" stroke="#fff"/>
<path d="M537.500 698V745" stroke="#ff8000" stroke-dasharray="3 2"/><path d="M537.500 745V760" stroke="#0f0"/>
<text x="391" y="695" textLength="124" lengthAdjust="spacingAndGlyphs">ESM19 [CV]  1 Day   #16</text>
<rect x="517" y="683" width="55" height="14" fill="#fff"/><text class="k n" x="519" y="694" textLength="51" lengthAdjust="spacingAndGlyphs">C: 2936.50</text>
<svg x="574" y="683" width="17" height="14" viewBox="574 683 17 14"><text x="575" y="694">T: 3</text></svg>
<text class="n" x="596" y="705">2942.00</text><text class="n" x="596" y="746">2940.00</text>
</svg>

<!-- W12 Renko -->
<rect x="640.500" y="645" width="780" height="125" fill="url(#fr)" stroke="#566"/>
<use href="#ico" x="647" y="648"/>
<text class="t" x="667" y="658" textLength="300" lengthAdjust="spacingAndGlyphs">ESM19 [CBV]  Renko 4t  #15  L:1 | E-Mini S&amp;P 500 (Jun19)</text>
<svg x="646" y="665" width="772" height="95" viewBox="646 665 772 95">
<rect x="646" y="665" width="772" height="95" fill="#000"/><path d="M647.500 665V760" stroke="#fff"/>
<rect x="652" y="681" width="112" height="31" fill="#ff8000"/><text x="654" y="706" style="fill:#000;font-size:26px;font-weight:bold;letter-spacing:0">15:53:46</text>
<rect x="650" y="666" width="138" height="15" fill="#0a78b8"/><rect x="650" y="681" width="57" height="15" fill="#0a78b8"/>
<text x="651" y="678" textLength="135" lengthAdjust="spacingAndGlyphs">[Sim1]  Trade: 1@2949.00</text><text x="651" y="693" textLength="54" lengthAdjust="spacingAndGlyphs">DPL: 0.00P</text>
<text x="790" y="678" textLength="145" lengthAdjust="spacingAndGlyphs">ESM19 [CBV]  Renko 4t  #15</text>
<rect x="936" y="666" width="55" height="15" fill="#fff"/><text class="k n" x="938" y="678" textLength="51" lengthAdjust="spacingAndGlyphs">C: 2936.50</text>
<text x="994" y="678" textLength="37" lengthAdjust="spacingAndGlyphs">T: 2932</text>
<rect x="1032" y="666" width="50" height="15" fill="#00b000"/><text class="k n" x="1034" y="678" textLength="46" lengthAdjust="spacingAndGlyphs">Chg: 0.25</text>
<rect x="1083" y="666" width="65" height="15" fill="#00b000"/><text class="k n" x="1085" y="678" textLength="61" lengthAdjust="spacingAndGlyphs">DChg: 24.00</text>
<text x="1151" y="678" textLength="266" lengthAdjust="spacingAndGlyphs">2019-04-23 15:53:43 H: 2936.75 L: 2935.75 O: 2936.2</text>
</svg>

<!-- W10 15 min -->
<rect x="1037.500" y="113.500" width="410" height="538" rx="5" fill="url(#fr)" stroke="#566"/>
<use href="#ico" x="1046" y="126"/><text class="t" x="1066" y="137" textLength="291" lengthAdjust="spacingAndGlyphs">ESM19 [CBV]  15 Min   #26  L:1 | E-Mini S&amp;P 500 (Jun19)</text>
<path d="M1046.500 145V626" stroke="#999"/>
<svg x="1047" y="145" width="371" height="481" viewBox="1047 145 371 481">
<rect x="1047" y="145" width="371" height="481" fill="#000"/>
<g transform="translate(1035,110) scale(.3333)" fill="none">
<path stroke="#777" stroke-width="4.500" d="M690 205H712M690 222H730M690 238H722M690 255H737M690 272H757M690 290H825M690 306H830M690 323H885M690 339H915M690 354H985M690 370H1100M690 387H1100M690 421H1023M690 438H1023M690 455H957M690 471H855M690 488H808M690 504H848M690 520H777M690 536H815M690 552H813M690 569H758M690 586H710M690 602H700M690 618H767M690 634H707M690 650H737M690 666H765M690 683H822M690 699H763M690 716H787M690 732H860M690 748H798M690 765H730M690 781H712"/>
<path d="M690 407H1146" stroke="#f0f" stroke-width="5"/>
<path d="M691 187V210" stroke="#00c" stroke-width="2"/>
<path d="M692 210H1146M692 210V310" stroke="#0f0" stroke-width="2"/>
<path d="M690 310V400" stroke="#0f0"/><path d="M690 415V500" stroke="#f0f" stroke-width="1.500"/><path d="M687 500V693" stroke="#0f0"/><path d="M685 693V797" stroke="#f0f" stroke-width="2"/>
<path class="gw" d="M898 717V752M928 637V782M958 523V750M988 197V555M1078 375V470M1108 310V437M988 883V900M658 868V880M628 890V900"/>
<path class="gw" d="M918 751H938"/>
<path class="gb" d="M889 752h18v48h-18zM949 539h18v198h-18zM979 293h18v245h-18zM1069 392h18v16h-18zM1099 358h18v34h-18zM649 875h18v18h-18zM619 892h18v8h-18z"/>
<path stroke="#fff" d="M1018 211V437"/><path d="M1009 292h18v120h-18z" fill="#fff" stroke="#fff"/>
<path class="rw" d="M1048 390V488M1138 325V440"/><path class="rb" d="M1129 343h18v97h-18z"/>
<path d="M55 409H1146" stroke="#fff" stroke-width="3" stroke-dasharray="6 4"/>
</g>
<g transform="translate(1035,370) scale(.3333)">
<path class="gw" d="M118 362V405M208 350V383M238 342V357M268 345V365M328 323V353M388 318V348M418 335V357M448 320V342M508 306V338M568 297V338M598 225V313M628 108V241M658 88V132M688 348V413M748 273V363M838 290V335M868 210V302M958 141V242M988 102V185M1048 185V212M1078 165V197M1108 126V172M259 352H277M829 297H847"/>
<path class="gb" d="M109 370h18v33h-18zM199 355h18v27h-18zM229 352h18v4h-18zM319 338h18v14h-18zM379 344h18v2h-18zM409 340h18v4h-18zM439 326h18v14h-18zM499 316h18v18h-18zM559 313h18v21h-18zM589 241h18v72h-18zM619 112h18v129h-18zM649 94h18v18h-18zM679 358h18v27h-18zM739 286h18v75h-18zM859 211h18v87h-18zM949 179h18v62h-18zM979 149h18v29h-18zM1039 187h18v18h-18zM1069 173h18v14h-18zM1099 143h18v28h-18z"/>
<path class="rw" d="M58 372V415M88 372V408M148 370V382M178 365V400M298 347V360M358 335V348M478 323V342M538 313V345M718 343V388M778 280V327M808 273V347M898 200V263M928 183V242M1018 126V215M1138 143V177M169 380H187M289 352H307M709 358H727M769 285H787"/>
<path class="rwb" d="M49 380h18v10h-18zM79 392h18v11h-18zM139 372h18v8h-18zM349 338h18v7h-18zM469 326h18v8h-18zM529 318h18v15h-18zM799 288h18v10h-18zM889 212h18v10h-18zM919 225h18v15h-18zM1009 149h18v56h-18zM1129 143h18v28h-18z"/>
<path d="M58 575H1146" stroke="#f0f"/><path d="M58 691H1146" stroke="#ff0" stroke-width="2"/>
<polyline class="lo" points="58,620 165,620 170,623 285,622 345,618 405,613 525,615 615,614 735,608 855,602 945,600 1035,590 1146,580"/>
<polyline class="lg" points="58,643 90,647 125,637 150,640 180,647 210,628 240,628 272,643 302,603 332,620 360,590 390,598 422,575 450,612 480,630 510,635 542,662 572,652 600,595 632,595 662,578 692,543 720,522 750,518 840,518 900,496 960,494 985,490 1020,508 1085,508 1146,527"/>
</g>
<path d="M1047 606.500H1418M1047.500 145V606" stroke="#fff" fill="none"/>
<path d="M1054 606v4M1104 606v4M1144 606v4M1184 606v4M1224 606v4M1264 606v4M1304 606v4M1344 606v4M1384 606v4" stroke="#fff"/>
<text x="1052" y="158" textLength="138" lengthAdjust="spacingAndGlyphs">ESM19 [CBV]  15 Min   #26</text>
<rect x="1192" y="146" width="55" height="15" fill="#fff"/><text class="k n" x="1194" y="158" textLength="51" lengthAdjust="spacingAndGlyphs">C: 2936.50</text>
<text x="1250" y="158" textLength="42" lengthAdjust="spacingAndGlyphs">T: 10795</text>
<rect x="1294" y="146" width="51" height="15" fill="#00b000"/><text class="k n" x="1296" y="158" textLength="47" lengthAdjust="spacingAndGlyphs">Chg: 1.75</text>
<rect x="1346" y="146" width="65" height="15" fill="#00b000"/><text class="k n" x="1348" y="158" textLength="61" lengthAdjust="spacingAndGlyphs">DChg: 24.00</text><text x="1413" y="158">2</text>
<text x="1052" y="388" textLength="168" lengthAdjust="spacingAndGlyphs">Cumulative Delta Bars - Volume</text>
<text class="g" x="1227" y="388" textLength="64" lengthAdjust="spacingAndGlyphs">Open: 16057</text><text class="dg" x="1298" y="388" textLength="60" lengthAdjust="spacingAndGlyphs">High: 17831</text><text class="r" x="1366" y="388" textLength="52" lengthAdjust="spacingAndGlyphs">Low: 1287</text>
<text x="1052" y="529">RSI</text><text class="g" x="1075" y="529" textLength="48" lengthAdjust="spacingAndGlyphs">RSI: 50.00</text><text class="m" x="1129" y="529" textLength="61" lengthAdjust="spacingAndGlyphs">Line1: 70.00</text><text class="y" x="1197" y="529" textLength="60" lengthAdjust="spacingAndGlyphs">Line2: 30.00</text><text class="o" x="1264" y="529" textLength="72" lengthAdjust="spacingAndGlyphs">RSI Avg: 73.94</text><text x="1345" y="529" textLength="72" lengthAdjust="spacingAndGlyphs">(Last, 14, 40, 7</text>
<rect x="1047" y="611" width="34" height="14" fill="#fff"/><text class="k n" x="1048" y="622">9-4-22</text>
<text class="n" x="1092" y="622">12:15</text><text class="n" x="1132" y="622">13:15</text><text class="n" x="1172" y="622">14:15</text><text class="n" x="1212" y="622">15:15</text>
<rect x="1252" y="611" width="25" height="14" fill="#fff"/><text class="k n" x="1253" y="622">4-23</text>
<text class="n" x="1292" y="622">10:30</text><text class="n" x="1332" y="622">11:30</text><text class="n" x="1372" y="622">12:30</text><text class="n" x="1412" y="622">13:30</text>
</svg>
<rect x="1047" y="626" width="371" height="18" fill="#f0f0f0"/><use href="#lt" x="1052" y="630"/>

<!-- W9 60 Min -->
<rect x="380.500" y="125.500" width="656" height="527" rx="5" fill="url(#fr)" stroke="#566"/>
<use href="#ico" x="389" y="138"/><text class="t" x="409" y="149" textLength="290" lengthAdjust="spacingAndGlyphs">ESM19 [CBV]  60 Min   #11  L:1 | E-Mini S&amp;P 500 (Jun19)</text><use href="#ctl" x="928" y="135"/>
<path d="M388.500 157.500H1030.500V626M388.500 157.500V626" fill="none" stroke="#777"/>
<svg x="389" y="158" width="641" height="468" viewBox="389 158 641 468">
<rect x="389" y="158" width="641" height="468" fill="#000"/>
<!-- volume profile -->
<g fill="#0000cc" stroke="#3a68e8">
<rect x="974" y="173" width="3" height="35"/><rect x="975" y="208" width="2" height="15"/><rect x="974" y="224" width="3" height="15"/><rect x="972" y="240" width="5" height="15"/><rect x="970" y="256" width="7" height="14"/><rect x="968" y="271" width="9" height="14"/><rect x="970" y="286" width="7" height="15"/><rect x="972" y="302" width="5" height="14"/><rect x="973" y="317" width="4" height="15"/><rect x="971" y="332" width="6" height="15"/><rect x="969" y="348" width="8" height="14"/><rect x="971" y="364" width="6" height="14"/><rect x="973" y="379" width="4" height="14"/><rect x="971" y="394" width="6" height="15"/><rect x="969" y="410" width="8" height="14"/><rect x="969" y="425" width="8" height="15"/><rect x="969" y="441" width="8" height="14"/><rect x="967" y="456" width="10" height="15"/><rect x="967" y="472" width="10" height="14"/>
</g>
<rect x="965" y="486" width="12" height="2" fill="#aaa"/>
<g transform="translate(385,125) scale(.41456,.33333)" fill="none">
<path d="M22 1037L1157 318" stroke="#0f0"/>
<path class="gw" d="M196 990V1088M212 1015V1050M218 1000V1045M225 952V1025M232 970V1022M334 1043V1088"/>
<path d="M196 990V1088M420 885V955M412 962V1030M390 1080V1088M398 1060V1088M405 1015V1088M970 883V1088M978 622V883M985 372V650" stroke="#0f0" stroke-width="2"/>
<path d="M968 883V1088M973 883V1088M977 636V883M981 636V883" stroke="#0f0"/>
<path class="rw" d="M204 945V1030M247 985V1088M428 877V1088M1007 415V490M955 1083V1088"/><path d="M201 990h6v40h-6zM245 1005h5v83h-5zM425 890h6v198h-6zM1004 462h7v28h-7z" fill="#f00"/>
<path stroke="#fff" d="M240 985V1020M992 425V513M340 1083V1088"/><path d="M236 990h8v12h-8z" fill="#fff"/>
<path class="gw" d="M1000 435V533M1014 468V557"/>
</g>
<rect x="393" y="282" width="472" height="3" fill="#fff"/>
<g transform="translate(385,480) scale(.41456,.33333)" fill="none">
<path d="M22 140H1016" stroke="#f0f"/><path d="M22 268H1016" stroke="#ff0"/>
<polyline class="lo" points="22,164 60,160 130,167 170,183 190,180 290,182 325,202 350,205 430,184 450,186 520,222 555,238 585,238 625,218 665,211 695,212 720,218 785,222 860,188 910,184 960,193 985,192 1016,182"/>
<polyline class="lg" points="22,172 32,172 42,205 55,178 63,178 70,240 82,285 92,232 105,212 120,202 135,222 150,200 157,220 168,165 172,130 184,82 192,118 198,98 206,125 240,122 248,170 262,200 275,210 290,230 298,300 305,332 315,332 328,305 335,240 345,240 360,190 385,165 400,130 410,98 424,90 428,150 435,255 445,262 455,255 460,280 467,250 478,268 500,265 525,312 545,270 565,262 575,218 590,205 604,158 613,205 630,155 650,147 662,133 690,150 705,225 712,170 720,170 730,225 748,288 758,265 775,280 782,308 790,240 800,175 815,165 830,170 835,140 850,125 870,140 885,125 893,155 915,195 922,175 940,222 950,190 960,195 975,130 985,103 1000,100 1010,110 1016,85"/>
</g>
<path d="M979.500 158V606.500H389" stroke="#fff" fill="none"/>
<path d="M979 206h3M979 247h3M979 288h3M979 329h3M979 370h3M979 412h3M979 453h3M979 516h3M979 558h3M979 600h3M457 606v4M493 606v4M532 606v4M569 606v4M607 606v4M661 606v4M694 606v4M757 606v4M793 606v4M832 606v4" stroke="#fff"/>
<text x="395" y="170" textLength="138" lengthAdjust="spacingAndGlyphs">ESM19 [CBV]  60 Min   #11</text>
<rect x="535" y="159" width="55" height="14" fill="#fff"/><text class="k n" x="537" y="170" textLength="51" lengthAdjust="spacingAndGlyphs">C: 2936.50</text>
<text x="592" y="170" textLength="43" lengthAdjust="spacingAndGlyphs">T: 22855</text>
<rect x="637" y="159" width="51" height="14" fill="#00b000"/><text class="k n" x="639" y="170" textLength="47" lengthAdjust="spacingAndGlyphs">Chg: 0.50</text>
<rect x="689" y="159" width="65" height="14" fill="#00b000"/><text class="k n" x="691" y="170" textLength="61" lengthAdjust="spacingAndGlyphs">DChg: 24.00</text>
<svg x="756" y="159" width="223" height="14" viewBox="756 159 223 14"><text x="756" y="170" textLength="229" lengthAdjust="spacingAndGlyphs">2019-04-23 15:53:43 H: 2936.75 L: 2933.75 C: 2</text></svg>
<text class="n" x="983" y="211">2944.00</text><text class="n" x="983" y="252">2940.00</text><text class="n" x="983" y="293">2936.00</text><text class="n" x="983" y="334">2932.00</text><text class="n" x="983" y="375">2928.00</text><text class="n" x="983" y="417">2924.00</text><text class="n" x="983" y="458">2920.00</text>
<rect x="982" y="277" width="41" height="14" fill="#fff"/><text class="k n" x="983" y="288" textLength="39" lengthAdjust="spacingAndGlyphs">2936.50</text>
<text x="395" y="500">RSI</text><text class="g" x="417" y="500" textLength="49" lengthAdjust="spacingAndGlyphs">RSI: 86.90</text><text class="m" x="472" y="500" textLength="61" lengthAdjust="spacingAndGlyphs">Line1: 70.00</text><text class="y" x="539" y="500" textLength="61" lengthAdjust="spacingAndGlyphs">Line2: 30.00</text><text class="o" x="606" y="500" textLength="73" lengthAdjust="spacingAndGlyphs">RSI Avg: 57.14</text><text x="688" y="500" textLength="131" lengthAdjust="spacingAndGlyphs">(Last, 14, 40, 70, 30, Smp)</text>
<text class="n" x="983" y="520">80.00</text><text class="n" x="983" y="563">40.00</text><svg x="983" y="594" width="30" height="11" viewBox="983 594 30 11"><text class="n" x="983" y="605">0.00</text></svg>
<rect x="390" y="611" width="31" height="14" fill="#fff"/><text class="k n" x="391" y="622" textLength="29" lengthAdjust="spacingAndGlyphs">9-4-15</text>
<rect x="445" y="611" width="25" height="14" fill="#fff"/><text class="k n" x="447" y="622">4-16</text>
<text class="n" x="480" y="622">11:30</text>
<rect x="521" y="611" width="24" height="14" fill="#fff"/><text class="k n" x="522" y="622">4-17</text>
<text class="n" x="556" y="622">11:30</text>
<rect x="596" y="611" width="24" height="14" fill="#fff"/><text class="k n" x="597" y="622">4-18</text>
<rect x="649" y="611" width="25" height="14" fill="#fff"/><text class="k n" x="650" y="622">4-21</text>
<rect x="682" y="611" width="25" height="14" fill="#fff"/><text class="k n" x="683" y="622">4-22</text>
<rect x="745" y="611" width="25" height="14" fill="#fff"/><text class="k n" x="746" y="622">4-23</text>
<text class="n" x="780" y="622">11:30</text>
<rect x="820" y="611" width="25" height="14" fill="#fff"/><text class="k n" x="821" y="622">4-24</text>
<rect x="1006" y="611" width="21" height="14" fill="#00b000"/><text x="1009" y="622">2 E</text>
</svg>
<rect x="389" y="626" width="641" height="18" fill="#f0f0f0"/><rect x="994" y="627" width="17" height="16" fill="#cdcdcd"/><use href="#lt" x="395" y="630"/><use href="#rt" x="1019" y="630"/>

<!-- bottom tabs -->
<rect x="5" y="760" width="1414" height="29" fill="#f0f0f0"/>
<path d="M5 788.500H1419" stroke="#aaa"/>
<g fill="#f0f0f0" stroke="#808080">
<rect x="153.500" y="765.500" width="107" height="22"/><rect x="262.500" y="765.500" width="170" height="22"/><rect x="434.500" y="765.500" width="143" height="22"/><rect x="579.500" y="765.500" width="220" height="22"/><rect x="801.500" y="765.500" width="128" height="22"/><rect x="931.500" y="765.500" width="176" height="22"/><rect x="1109.500" y="765.500" width="155" height="22"/><rect x="1266.500" y="765.500" width="130" height="22"/>
</g>
<rect x="9" y="765" width="144" height="22" fill="#0078d7"/>
<text x="15" y="781" textLength="131" lengthAdjust="spacingAndGlyphs" style="fill:#e8f2fb">GGCM19 [CBV]  Daily  #9</text>
<text class="k" x="158" y="781" textLength="98" lengthAdjust="spacingAndGlyphs">NQM19  Daily  #10</text>
<text class="k" x="268" y="781" textLength="160" lengthAdjust="spacingAndGlyphs">ESM19 [CBV]  60 Min   #11  L:1</text>
<text class="k" x="439" y="781" textLength="133" lengthAdjust="spacingAndGlyphs">GHGK19 [CB]  1 Day   #13</text>
<text class="k" x="584" y="781" textLength="210" lengthAdjust="spacingAndGlyphs">ESM19 [CBV]  Aligned Renko 2t  #12  L:1</text>
<text class="k" x="806" y="781" textLength="119" lengthAdjust="spacingAndGlyphs">6EM19 [CB]  Daily  #14</text>
<text class="k" x="936" y="781" textLength="166" lengthAdjust="spacingAndGlyphs">ESM19 [CBV]  Renko 4t  #15  L:1</text>
<text class="k" x="1114" y="781" textLength="145" lengthAdjust="spacingAndGlyphs">ESM19 [CV]  1 Day   #16  L:1</text>
<svg x="1271" y="768" width="108" height="18" viewBox="1271 768 108 18"><text class="k" x="1271" y="781" textLength="148" lengthAdjust="spacingAndGlyphs">ESM19 [CBV]  2000 Vol  #17</text></svg>
<rect x="1379.500" y="765.500" width="17" height="22" fill="#f0f0f0" stroke="#808080"/><rect x="1397.500" y="765.500" width="20" height="22" fill="#f0f0f0" stroke="#808080"/>
<path d="M1390 771v10l-6-5zM1405 771v10l6-5z" fill="#000"/>

<!-- right wallpaper strip -->
<rect x="1419" y="0" width="19" height="801" fill="url(#wr)"/>
<path d="M1418.500 0V789" stroke="#b0b0b0"/>
</svg>
</body></html>
